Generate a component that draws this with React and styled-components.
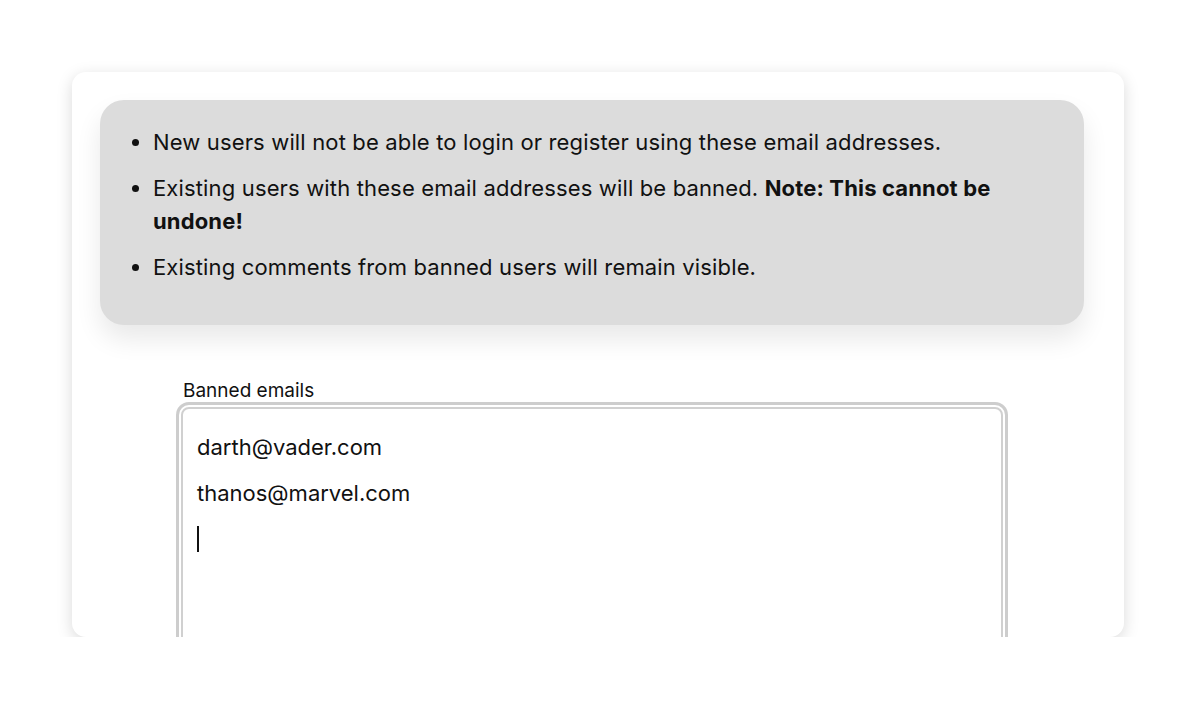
import { useEffect, useRef } from 'react';
import styled, { createGlobalStyle } from 'styled-components';

const GlobalStyle = createGlobalStyle`
  html, body {
    margin: 0;
    padding: 0;
    background: #ffffff;
  }
  body {
    font-family: Inter, "Noto Sans", "Liberation Sans", sans-serif;
    color: #111;
  }
`;

const Page = styled.div`
  padding: 72px 72px 0 72px;
`;

const Card = styled.div`
  width: 1052px;
  height: 565px;
  box-sizing: border-box;
  padding: 28px 40px 0 28px;
  background: #fff;
  border-radius: 14px;
  box-shadow: 0 4px 16px rgba(0, 0, 0, 0.15);
  overflow: hidden;
`;

const Notice = styled.div`
  background: #dcdcdc;
  border-radius: 24px;
  padding: 26px 40px 41px 53px;
  box-shadow: 0 14px 26px rgba(0, 0, 0, 0.09);
`;

const List = styled.ul`
  margin: 0;
  padding: 0;
`;

const Item = styled.li`
  font-size: 22px;
  line-height: 33px;
  letter-spacing: 0.15px;
  margin-bottom: 13px;
  &:last-child {
    margin-bottom: 0;
  }
  strong {
    font-weight: 700;
  }
`;

const Form = styled.div`
  margin: 55px 0 0 81px;
`;

const Label = styled.label`
  display: block;
  font-size: 19px;
  line-height: 22px;
  padding-left: 2px;
  margin-bottom: 5px;
`;

const Field = styled.div`
  position: relative;
  width: 822px;
`;

const Textarea = styled.textarea`
  display: block;
  width: 100%;
  height: 300px;
  box-sizing: border-box;
  padding: 15px 14px 14px;
  border: 2px solid #d0d0d0;
  border-radius: 8px;
  box-shadow: 0 0 0 2px #fff, 0 0 0 5px #cdcdcd;
  outline: none;
  resize: none;
  font-family: Inter, "Noto Sans", "Liberation Sans", sans-serif;
  font-size: 22px;
  line-height: 46px;
  color: #111;
  caret-color: transparent;
`;

const Caret = styled.span`
  position: absolute;
  left: 16px;
  top: ${(p) => p.$line * 46 + 27}px;
  width: 1.5px;
  height: 26px;
  background: #111;
  pointer-events: none;
`;

const emails = 'darth@vader.com\nthanos@marvel.com\n';

export default function App() {
  const ref = useRef(null);

  useEffect(() => {
    const el = ref.current;
    if (el) {
      el.focus();
      el.setSelectionRange(emails.length, emails.length);
    }
  }, []);

  return (
    <>
      <GlobalStyle />
      <Page>
        <Card>
          <Notice>
            <List>
              <Item>New users will not be able to login or register using these email addresses.</Item>
              <Item>
                Existing users with these email addresses will be banned. <strong>Note: This cannot be undone!</strong>
              </Item>
              <Item>Existing comments from banned users will remain visible.</Item>
            </List>
          </Notice>
          <Form>
            <Label htmlFor="banned">Banned emails</Label>
            <Field>
              <Textarea id="banned" ref={ref} defaultValue={emails} spellCheck={false} />
              <Caret $line={2} />
            </Field>
          </Form>
        </Card>
      </Page>
    </>
  );
}
